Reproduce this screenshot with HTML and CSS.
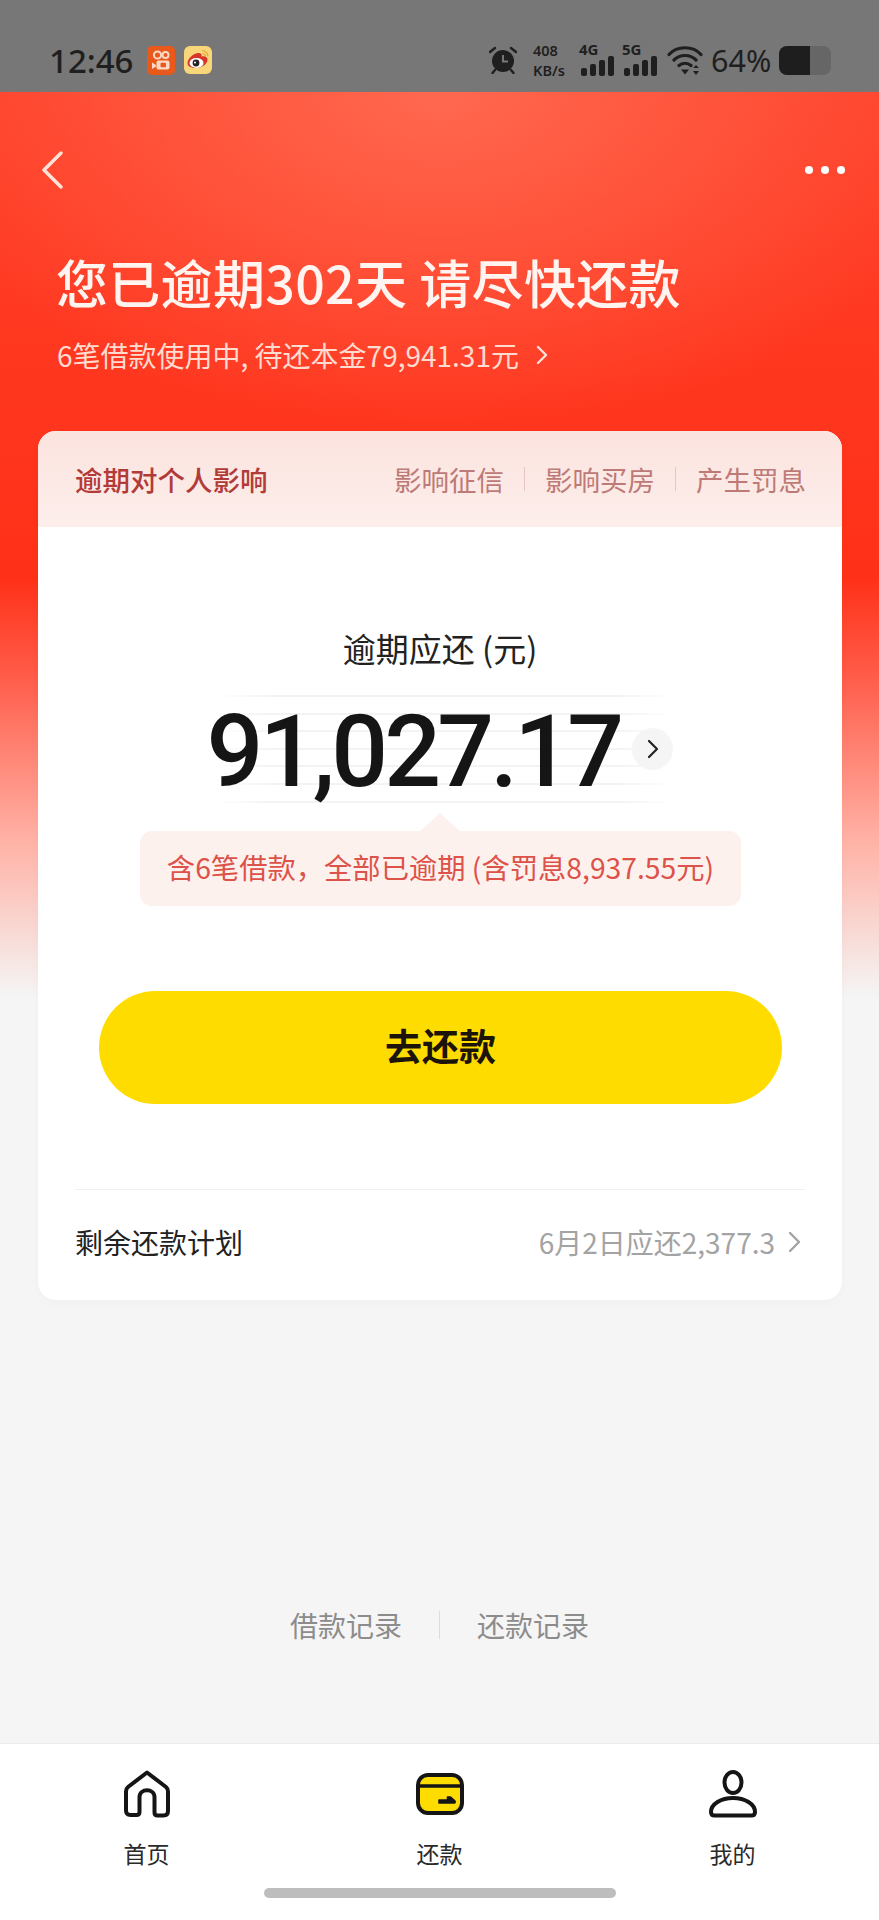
FILE: index.html

```html
<!DOCTYPE html>
<html lang="zh-CN">
<head>
  <meta charset="UTF-8" />
  <meta name="viewport" content="width=device-width, initial-scale=1.0" />
  <title>还款</title>
  <link rel="stylesheet" href="styles.css">
</head>
<body>
  <div class="status">
    <span class="time">12:46</span>
    <svg class="app-icon" width="28" height="29" viewBox="0 0 28 29">
      <rect width="28" height="29" rx="5" fill="#e9591c"/>
      <circle cx="10.5" cy="9" r="3.6" fill="none" stroke="#fbd9c4" stroke-width="2"/>
      <circle cx="18.5" cy="9" r="3" fill="none" stroke="#fbd9c4" stroke-width="2"/>
      <rect x="9.5" y="14.5" width="13" height="9" rx="2" fill="#fbd9c4"/>
      <rect x="13.5" y="16.8" width="5.5" height="4.4" rx="1" fill="#e9591c"/>
      <path d="M5 16.5l4 2.4v1.6l-4 2.4z" fill="#fbd9c4"/>
    </svg>
    <svg class="app-icon icon-weibo" width="28" height="28" viewBox="0 0 28 28">
      <rect width="28" height="28" rx="6" fill="#f7d77a"/>
      <path d="M3.5 17.5c0-5 6-10.500 11-10.500 2.500 0 3.500 1.500 3 3.500 3.500-1 6 .5 6 3 0 4.500-5.500 8.500-11.500 8.500-4.500 0-8.500-1.500-8.500-4.500z" fill="#d8352a"/>
      <ellipse cx="12.500" cy="17" rx="7" ry="5" fill="#fff"/>
      <circle cx="12" cy="17" r="3.400" fill="#222"/>
      <circle cx="11" cy="16.500" r="1" fill="#fff"/>
      <path d="M18 4.500c3 0 6 2.500 6 6M18.500 7.500c1.800 0 3 1.300 3 3" fill="none" stroke="#e8a33a" stroke-width="1.200"/>
    </svg>
    <div class="status-right">
      <svg width="28" height="28" viewBox="0 0 28 28">
        <circle cx="14" cy="15" r="11" fill="#1f1f1f"/>
        <path d="M14 9v6.500h5" fill="none" stroke="#777" stroke-width="2"/>
        <path d="M1 6l5-4M27 6l-5-4" stroke="#1f1f1f" stroke-width="2.400" stroke-linecap="round"/>
        <path d="M6 24l-2.500 3M22 24l2.500 3" stroke="#1f1f1f" stroke-width="2.400" stroke-linecap="round"/>
      </svg>
      <div class="speed"><span>408</span><span>KB/s</span></div>
      <div class="signal">
        <span class="net">4G</span>
        <svg width="33" height="20" viewBox="0 0 33 20">
          <rect x="0" y="12" width="6" height="8" rx="2" fill="#1f1f1f"/>
          <rect x="9" y="8" width="6" height="12" rx="2" fill="#1f1f1f"/>
          <rect x="18" y="4" width="6" height="16" rx="2" fill="#1f1f1f"/>
          <rect x="27" y="0" width="6" height="20" rx="2" fill="#1f1f1f"/>
        </svg>
      </div>
      <div class="signal">
        <span class="net">5G</span>
        <svg width="33" height="20" viewBox="0 0 33 20">
          <rect x="0" y="12" width="6" height="8" rx="2" fill="#1f1f1f"/>
          <rect x="9" y="8" width="6" height="12" rx="2" fill="#1f1f1f"/>
          <rect x="18" y="4" width="6" height="16" rx="2" fill="#1f1f1f"/>
          <rect x="27" y="0" width="6" height="20" rx="2" fill="#1f1f1f"/>
        </svg>
      </div>
      <svg width="36" height="29" viewBox="0 0 36 29">
        <path d="M2 8.500C10-.5 26-.5 34 8.500M7 14c6-6 16-6 22 0M12 19.500c3.300-3 8.700-3 12 0" fill="none" stroke="#1f1f1f" stroke-width="3.200" stroke-linecap="round"/>
        <path d="M14 23.500h8l-4 5z" fill="#1f1f1f"/>
        <path d="M29 19l3 3h-6zM29 29l3-4h-6z" fill="#1f1f1f"/>
      </svg>
      <span class="battery-text">64%</span>
      <div class="battery"><div class="battery-fill"></div></div>
    </div>
  </div>

  <div class="page">
    <div class="hero">
      <div class="hero-nav">
        <svg width="22" height="38" viewBox="0 0 22 38">
          <path d="M20 2L3 19l17 17" fill="none" stroke="#ffe3da" stroke-width="3.400" stroke-linecap="round" stroke-linejoin="round"/>
        </svg>
        <div class="dots"><i></i><i></i><i></i></div>
      </div>
      <h1>您已逾期302天 请尽快还款</h1>
      <div class="hero-sub">
        <span>6笔借款使用中, 待还本金79,941.31元</span>
        <svg width="12" height="20" viewBox="0 0 12 20">
          <path d="M2 2l8 8-8 8" fill="none" stroke="#ffe3da" stroke-width="2.400" stroke-linecap="round" stroke-linejoin="round"/>
        </svg>
      </div>
    </div>

    <div class="card">
      <div class="card-head">
        <span class="head-title">逾期对个人影响</span>
        <div class="head-tags">
          <span>影响征信</span>
          <i></i>
          <span>影响买房</span>
          <i></i>
          <span>产生罚息</span>
        </div>
      </div>

      <div class="due-label">逾期应还 (元)</div>
      <div class="amount-row">
        <span class="amount">91,027.17</span>
        <span class="amount-more">
          <svg width="12" height="20" viewBox="0 0 12 20">
            <path d="M2 2l8 8-8 8" fill="none" stroke="#222" stroke-width="2.200" stroke-linecap="round" stroke-linejoin="round"/>
          </svg>
        </span>
      </div>
      <div class="notice">含6笔借款，全部已逾期 (含罚息8,937.55元)</div>

      <button class="btn-pay">去还款</button>

      <div class="plan">
        <span class="plan-name">剩余还款计划</span>
        <div class="plan-info">
          <span>6月2日应还2,377.3</span>
          <svg width="14" height="22" viewBox="0 0 14 22">
            <path d="M2 2l9 9-9 9" fill="none" stroke="#a3a3a3" stroke-width="2.400" stroke-linecap="round" stroke-linejoin="round"/>
          </svg>
        </div>
      </div>
    </div>

    <div class="records">
      <span>借款记录</span>
      <i></i>
      <span>还款记录</span>
    </div>
  </div>

  <nav class="tabbar">
    <div class="tabs">
      <div class="tab">
        <svg width="48" height="48" viewBox="0 0 48 48">
          <path d="M24 2.500L5 17c-1.500 1.200-2 2.500-2 4.500v19c0 3 1.500 4.500 4.500 4.500h6c2 0 3-1 3-3V27c0-9 15-9 15 0v15.500c0 2 1 3 3 3h6c3 0 4.500-1.500 4.500-4.500v-19.500c0-2-.5-3.300-2-4.500z" fill="none" stroke="#151515" stroke-width="4" stroke-linejoin="round"/>
        </svg>
        <span>首页</span>
      </div>
      <div class="tab">
        <svg width="48" height="48" viewBox="0 0 48 42">
          <rect x="2" y="2" width="44" height="38" rx="10" fill="#ffdc00" stroke="#151515" stroke-width="4"/>
          <path d="M2 13h44" stroke="#151515" stroke-width="3.600"/>
          <path d="M23 30h15c1.500 0 1.500-1.500.5-2.500l-4-3.500h-3v3H23z" fill="#151515" stroke="#151515" stroke-width="1.600" stroke-linejoin="round"/>
        </svg>
        <span>还款</span>
      </div>
      <div class="tab">
        <svg width="48" height="48" viewBox="0 0 48 48">
          <ellipse cx="24" cy="12.500" rx="8.500" ry="10.500" fill="none" stroke="#151515" stroke-width="4"/>
          <path d="M24 28C12 28 2 34 2 42c0 2 1 3.500 3.500 3.500h37c2.500 0 3.500-1.500 3.500-3.500 0-8-10-14-22-14z" fill="none" stroke="#151515" stroke-width="4" stroke-linejoin="round"/>
        </svg>
        <span>我的</span>
      </div>
    </div>
    <div class="home-bar"></div>
  </nav>
</body>
</html>
```

FILE: styles.css

```css
* {
  box-sizing: border-box;
}
html, body {
  margin: 0;
  padding: 0;
}
body {
  width: 879px;
  height: 1920px;
  display: flex;
  flex-direction: column;
  overflow: hidden;
  font-family: "Noto Sans CJK SC", "Noto Sans", sans-serif;
  background: #f5f5f5;
  color: #1a1a1a;
}

/* status bar */
.status {
  height: 92px;
  flex: none;
  display: flex;
  align-items: center;
  padding: 28px 48px 0 49px;
  background: #777;
  color: #1f1f1f;
}
.time {
  font-family: "Noto Sans", sans-serif;
  font-size: 33px;
  font-weight: 500;
  line-height: 1;
  width: 98px;
}
.icon-weibo {
  margin-left: 9px;
}
.status-right {
  margin-left: auto;
  display: flex;
  align-items: center;
  height: 40px;
}
.speed {
  display: flex;
  flex-direction: column;
  margin-left: 16px;
  font-family: "Noto Sans", sans-serif;
  font-size: 14.500px;
  font-weight: 600;
  line-height: 20px;
  width: 48px;
}
.signal {
  position: relative;
  width: 43px;
  height: 32px;
}
.signal svg {
  position: absolute;
  left: 0;
  bottom: 0;
}
.net {
  position: absolute;
  left: -2px;
  top: -2px;
  font-family: "Noto Sans", sans-serif;
  font-size: 15px;
  font-weight: 700;
  line-height: 15px;
}
.battery-text {
  font-family: "Noto Sans", sans-serif;
  font-size: 30.500px;
  margin-left: 8px;
  width: 68px;
  line-height: 1;
}
.battery {
  width: 52px;
  height: 29px;
  border-radius: 8px;
  background: #666;
  overflow: hidden;
}
.battery-fill {
  width: 31px;
  height: 100%;
  background: #1e1e1e;
}

/* red area */
.page {
  flex: 1;
  display: flex;
  flex-direction: column;
  background:
    radial-gradient(ellipse 540px 340px at 440px 0, rgba(255, 118, 92, 0.75), rgba(255, 118, 92, 0) 100%),
    linear-gradient(180deg, #ff4029 0, #ff3018 485px, #ff5f4c 590px, #ffb0a4 745px, #f5f5f5 905px);
}
.hero {
  padding: 48px 34px 0 37px;
  color: #fff;
}
.hero-nav {
  height: 60px;
  display: flex;
  align-items: center;
  justify-content: space-between;
  padding-left: 4px;
}
.dots {
  display: flex;
  gap: 8px;
}
.dots i {
  width: 8px;
  height: 8px;
  border-radius: 50%;
  background: #fff;
}
.hero h1 {
  margin: 52px 0 0 19px;
  font-size: 52px;
  line-height: 60px;
  font-weight: 500;
  letter-spacing: 0.300px;
  color: #fff4ef;
}
.hero-sub {
  margin: 25px 0 0 20px;
  display: flex;
  align-items: center;
  gap: 17px;
  font-size: 28px;
  line-height: 36px;
  color: #ffdccf;
}

/* main card */
.card {
  margin: 58px 37px 0 38px;
  height: 869px;
  border-radius: 18px;
  background: #fff;
  overflow: hidden;
  box-shadow: 0 4px 12px rgba(0, 0, 0, 0.02);
}
.card-head {
  height: 96px;
  display: flex;
  align-items: center;
  justify-content: space-between;
  padding: 0 36px 0 37px;
  background: linear-gradient(180deg, #fbe3de, #fdeeeb);
}
.head-title {
  font-size: 27.500px;
  font-weight: 500;
  color: #b23b38;
}
.head-tags {
  display: flex;
  align-items: center;
  gap: 20px;
  font-size: 27.500px;
  color: #bd7a76;
}
.head-tags i {
  width: 1px;
  height: 24px;
  background: #e6c8c3;
}
.due-label {
  margin-top: 101px;
  text-align: center;
  font-size: 33px;
  line-height: 40px;
  color: #222;
}
.amount-row {
  position: relative;
  height: 108px;
  margin-top: 27px;
  display: flex;
  align-items: center;
  justify-content: center;
  gap: 12px;
}
.amount-row::before {
  content: "";
  position: absolute;
  left: 180px;
  width: 454px;
  top: 0;
  bottom: 0;
  background: repeating-linear-gradient(180deg, #f3f3f3 0, #f3f3f3 2px, transparent 2px, transparent 17.600px);
  -webkit-mask-image: linear-gradient(90deg, transparent, #000 12%, #000 88%, transparent);
  mask-image: linear-gradient(90deg, transparent, #000 12%, #000 88%, transparent);
}
.amount {
  position: relative;
  top: 3px;
  font-family: Roboto, sans-serif;
  font-size: 100px;
  font-weight: 500;
  line-height: 108px;
  letter-spacing: -3.800px;
  color: #151515;
}
.amount-more {
  position: relative;
  width: 41px;
  height: 42px;
  border-radius: 50%;
  background: #f5f5f5;
  display: flex;
  align-items: center;
  justify-content: center;
}
.notice {
  position: relative;
  margin: 28px 101px 0 102px;
  height: 75px;
  border-radius: 12px;
  background: #fdf1ee;
  color: #dd5249;
  font-size: 28.300px;
  line-height: 71px;
  text-align: center;
  white-space: nowrap;
}
.notice::before {
  content: "";
  position: absolute;
  left: 280px;
  top: -18px;
  width: 40px;
  height: 18px;
  background: #fdf1ee;
  clip-path: polygon(50% 0, 100% 100%, 0 100%);
}
.btn-pay {
  display: block;
  width: 683px;
  height: 113px;
  margin: 85px 0 0 61px;
  padding: 0 0 5px 0;
  border: none;
  border-radius: 57px;
  background: #ffdc00;
  color: #1c1408;
  font-family: inherit;
  font-size: 37px;
  font-weight: 700;
}
.plan {
  height: 112px;
  margin: 85px 37px 0 37px;
  padding-bottom: 7px;
  border-top: 1px solid #f0f0f0;
  display: flex;
  align-items: center;
  justify-content: space-between;
  font-size: 28px;
}
.plan-name {
  color: #222;
}
.plan-info {
  display: flex;
  align-items: center;
  gap: 13px;
  padding-right: 3px;
  color: #a3a3a3;
}

/* links under the card */
.records {
  margin-top: 305px;
  display: flex;
  align-items: center;
  justify-content: center;
  gap: 37px;
  font-size: 28px;
  line-height: 40px;
  color: #8c8c8c;
}
.records i {
  width: 1px;
  height: 28px;
  background: #dcdcdc;
}

/* bottom tabs */
.tabbar {
  height: 177px;
  flex: none;
  background: #fff;
  border-top: 1px solid #ececec;
}
.tabs {
  display: flex;
  justify-content: space-between;
  padding: 26px 0 0 0;
}
.tab {
  width: 293px;
  display: flex;
  flex-direction: column;
  align-items: center;
  gap: 19px;
  font-size: 23px;
  line-height: 32px;
  color: #2a2a2a;
}
.home-bar {
  width: 352px;
  height: 10px;
  margin: 19px auto 0 auto;
  border-radius: 5px;
  background: #bdbdbd;
}
```
